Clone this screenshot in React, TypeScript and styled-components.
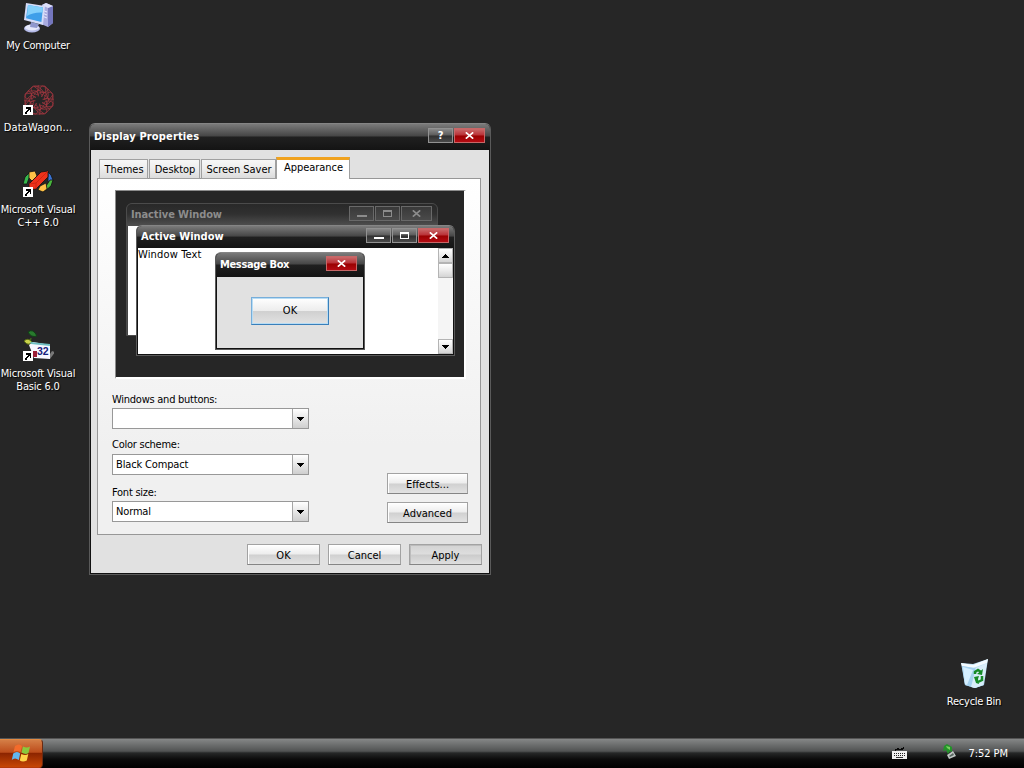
import React from "react";
import styled, { createGlobalStyle, css } from "styled-components";

type CaptionKind = "help" | "min" | "max" | "close";

interface CaptionProps {
  kind: CaptionKind;
  inactive?: boolean;
}

// Glyphs for the title bar buttons
const CaptionButton: React.FC<CaptionProps> = ({ kind, inactive = false }) => (
  <CaptionBox $close={kind === "close"} $inactive={inactive}>
    {kind === "help" && "?"}
    {kind === "min" && (
      <svg width="10" height="9" shapeRendering="crispEdges">
        <path d="M0 6h10v2H0z" fill="currentColor" />
      </svg>
    )}
    {kind === "max" && (
      <svg width="9" height="7" shapeRendering="crispEdges">
        <path d="M0 0h9v7H0zM1 2v4h7V2z" fill="currentColor" fillRule="evenodd" />
      </svg>
    )}
    {kind === "close" && (
      <svg width="9" height="7">
        <path d="M.8.3 8.2 6.7M8.2.3.8 6.7" stroke="currentColor" strokeWidth="1.6" />
      </svg>
    )}
  </CaptionBox>
);

const Arrow: React.FC<{ up?: boolean }> = ({ up = false }) => (
  <svg width="7" height="4" shapeRendering="crispEdges">
    <path d={up ? "M3 0h1v1h1v1h1v1h1v1H0V3h1V2h1V1h1z" : "M0 0h7v1H6v1H5v1H4v1H3V3H2V2H1V1H0z"} />
  </svg>
);

const Shortcut = () => (
  <g shapeRendering="crispEdges" transform="translate(1 -1)">
    <path d="M0 22h10v10H0z" fill="#fff" />
    <path d="M3 24h5v5H7v-2H6v1H5v1H4v2H2v-2h1v-1h1v-1h1v-1H3z" fill="#000" />
  </g>
);

const ComputerIcon = () => (
  <svg width="32" height="32" viewBox="0 0 32 32">
    <path d="m20 3 4-2 7 3v17l-5 4-7-3z" fill="#a9abdf" />
    <path d="m26 6 5-2v17l-5 4z" fill="#7476bd" />
    <path d="m20 3 4-2 7 3-5 2z" fill="#dcdff9" />
    <path d="m20 8 5 2M20 11l5 2M20 14l5 2" stroke="#e9eaff" />
    <ellipse cx="10" cy="26.500" rx="8" ry="4" fill="#b5bbe8" />
    <ellipse cx="10" cy="25.500" rx="7" ry="3" fill="#e6e9fb" />
    <path d="m9 20 8 2-2 4-7-1z" fill="#8f98ce" />
    <path d="M4 1 23 4 21 23 2 18z" fill="#d5dcf8" />
    <path d="m6 3 15 2.500-1.600 14.500L4 16.300z" fill="#3e9fe9" />
    <path d="m6 3 15 2.500-.5 5Q11 10 5 14z" fill="#83d0fb" />
  </svg>
);

const RosetteIcon = () => (
  <svg width="32" height="32" viewBox="0 0 32 32">
    <g fill="none" stroke="#a53640" strokeWidth="0.7">
      {[0, 45, 90, 135, 180, 225, 270, 315].map((angle) => (
        <path
          key={angle}
          d="M17 11Q9 10 9 4Q14 0 19 5Q24 9 19 13M12 2 23 2 24 9 16 6 12 11M20 11 27 5"
          transform={`rotate(${angle} 17 16)`}
        />
      ))}
    </g>
    <Shortcut />
  </svg>
);

// Green and blue ring behind a red bar with two yellow blocks
const CppIcon = () => (
  <svg width="32" height="32" viewBox="0 0 32 32">
    <g stroke="#111" strokeWidth="0.8">
      <path d="M1 18 3 11l5-5h3L7 12l-2 6z" fill="#36b84b" />
      <path d="m7 6 6-1 2 5-5 5-3-3z" fill="#ffc247" />
      <path d="m26 6 3 3 2 5-2 5-3-4z" fill="#3973d2" />
      <path d="m31 14-2 6-6 5 1-5 4-6z" fill="#49b63d" />
      <path d="m18 20 6-3 1 6-4 3-5-2z" fill="#ffc247" />
      <path d="m7 18 12-12 7-1v6L14 23l-7 1z" fill="#ed321b" />
      <path d="m7 18 7-1v6M14 17 26 5" fill="none" stroke="#c9220f" />
    </g>
    <Shortcut />
  </svg>
);

const BasicIcon = () => (
  <svg width="32" height="32" viewBox="0 0 32 32">
    <path d="M6 2q5-4 9 4-6 2-9-4z" fill="#287b2d" stroke="#123d17" />
    <path d="M2 11q4-4 8 1-4 5-8-1z" fill="#cbd34b" stroke="#596b16" />
    <path d="M9 8q-2 3 2 5" stroke="#4b7b1b" fill="none" />
    <path d="m26 27 4-6 3 1-5 7z" fill="#777" />
    <path d="m7 15 4-3 17 3v14L12 28z" fill="#f8f8ff" />
    <path d="m8 12 20 2v2L9 14z" fill="#6ebec1" />
    <path d="M11 21h4v6h-4z" fill="#9d2037" />
    <text x="15" y="25" fontFamily="Liberation Sans" fontWeight="bold" fontSize="10.5" fill="#17227b">32</text>
    <Shortcut />
  </svg>
);

const BinIcon = () => (
  <svg width="32" height="32" viewBox="0 0 32 32">
    <path d="m3 5 12 1L30 1l-4 26-9 3-10-3z" fill="#bddff2" />
    <path d="m3 5 12 2L30 1l-1 4-14 5L4 8z" fill="#f4fbff" />
    <path d="m4 8 13 2 9 17-9 3-10-3z" fill="#a5d2f0" />
    <path d="m5 9 10 3-6 15-2-1z" fill="#d5efff" />
    <path d="m29 5-4 22-8 3-4-1 5-19z" fill="#d9edf9" />
    <g fill="none" stroke="#168b28" strokeWidth="2.500">
      <path d="M17 16v-2l3-2 3 2M24 18v4l-4 2" />
    </g>
    <path d="m25 11-1 6-5-1zM16 19l5-1-1 3 1 5-3-1z" fill="#168b28" />
  </svg>
);

const WindowsLogo = () => (
  <svg width="20" height="19" viewBox="0 0 20 19">
    <path d="M4 2q4-3 7 0L9.500 8q-4-2-7 0z" fill="#f36b2b" />
    <path d="M12 2.500q4 2 7 0L17.500 9q-3 2-7-.5z" fill="#8ac83c" />
    <path d="M2.200 9.500q4-3 7 0L7.800 16q-4-3-7 0z" fill="#62b7ef" />
    <path d="M10.300 10q4 2 7 0l-1.500 6.500q-4 2-7 0z" fill="#ffd449" />
  </svg>
);

const KeyboardIcon = () => (
  <svg width="15" height="13" shapeRendering="crispEdges">
    <path d="M3 2h2V1h2v1h2V1h2V0h1v2h-1v1H4v1H3z" fill="#090909" />
    <path d="M0 4h15v8H0z" fill="#f1f1f1" />
    <path d="M2 6.500h11M2 8.500h11" stroke="#222" strokeDasharray="1 1" />
    <path d="M4 10h7v1H4z" fill="#333" />
  </svg>
);

const SafelyRemoveIcon = () => (
  <svg width="14" height="16">
    <path d="m4 11 6-4 3 5-7 3z" fill="#c1c8c5" />
    <path d="m6 12 4-3 1 2-4 2z" fill="#586660" />
    <path d="M1 2 4 0l5 3v5L7 7l-2 3-2-4-3 1z" fill="#239329" />
    <path d="m3 2 4 1v3L4 4z" fill="#77d15e" />
  </svg>
);

const shortcuts = [
  { x: 0, y: 2, label: "My Computer", spacing: -0.3, icon: <ComputerIcon /> },
  { x: 0, y: 84, label: "DataWagon...", spacing: 0.15, icon: <RosetteIcon /> },
  { x: 0, y: 166, label: "Microsoft Visual\nC++ 6.0", spacing: -0.2, icon: <CppIcon /> },
  { x: 0, y: 330, label: "Microsoft Visual\nBasic 6.0", spacing: -0.2, icon: <BasicIcon /> },
  { x: 936, y: 658, label: "Recycle Bin", spacing: -0.25, icon: <BinIcon /> },
];

const fields = [
  { label: "Windows and buttons:", value: "", top: 14, gap: 1 },
  { label: "Color scheme:", value: "Black Compact", top: 9, gap: 2 },
  { label: "Font size:", value: "Normal", top: 11, gap: 1 },
];

const App: React.FC = () => (
  <Desktop>
    <GlobalStyle />
    <Workspace>
      {shortcuts.map((item) => (
        <DesktopItem key={item.label} $x={item.x} $y={item.y}>
          {item.icon}
          <ItemLabel $spacing={item.spacing}>{item.label}</ItemLabel>
        </DesktopItem>
      ))}

      <Dialog>
        <TitleBar $height={25}>
          <Title $spacing={0.15}>Display Properties</Title>
          <CaptionButton kind="help" />
          <CaptionButton kind="close" />
        </TitleBar>
        <DialogBody>
          <Tabs>
            <Tab $width={49}>Themes</Tab>
            <Tab $width={51}>Desktop</Tab>
            <Tab $width={75}>Screen Saver</Tab>
            <ActiveTab>Appearance</ActiveTab>
          </Tabs>
          <Panel>
            <Preview>
              <InactiveWindow>
                <TitleBar $height={21} $inactive>
                  <Title $spacing={-0.1}>Inactive Window</Title>
                  <CaptionButton kind="min" inactive />
                  <CaptionButton kind="max" inactive />
                  <CaptionButton kind="close" inactive />
                </TitleBar>
                <WindowContent />
              </InactiveWindow>
              <ActiveWindow>
                <TitleBar $height={21}>
                  <Title $spacing={0}>Active Window</Title>
                  <CaptionButton kind="min" />
                  <CaptionButton kind="max" />
                  <CaptionButton kind="close" />
                </TitleBar>
                <WindowContent>
                  <WindowText>Window Text</WindowText>
                  <ScrollBar>
                    <ScrollButton><Arrow up /></ScrollButton>
                    <ScrollButton />
                    <ScrollTrack />
                    <ScrollButton><Arrow /></ScrollButton>
                  </ScrollBar>
                </WindowContent>
              </ActiveWindow>
              <MessageBox>
                <TitleBar $height={23} $right={7}>
                  <Title $spacing={-0.35}>Message Box</Title>
                  <CaptionButton kind="close" />
                </TitleBar>
                <MessageContent>
                  <DefaultButton>OK</DefaultButton>
                </MessageContent>
              </MessageBox>
            </Preview>
            <Form>
              <div>
                {fields.map((field) => (
                  <Field key={field.label} $top={field.top} $gap={field.gap}>
                    <Label>{field.label}</Label>
                    <Select>
                      <SelectValue>{field.value}</SelectValue>
                      <SelectArrow><Arrow /></SelectArrow>
                    </Select>
                  </Field>
                ))}
              </div>
              <SideButtons>
                <Button $width={81}>Effects...</Button>
                <Button $width={81}>Advanced</Button>
              </SideButtons>
            </Form>
          </Panel>
          <Footer>
            <Button $width={73}>OK</Button>
            <Button $width={73}>Cancel</Button>
            <Button $width={73} $pressed>Apply</Button>
          </Footer>
        </DialogBody>
      </Dialog>
    </Workspace>
    <Taskbar>
      <StartButton><WindowsLogo /></StartButton>
      <Tray>
        <KeyboardIcon />
        <TrayIcon><SafelyRemoveIcon /></TrayIcon>
        <Clock>7:52 PM</Clock>
      </Tray>
    </Taskbar>
  </Desktop>
);

const GlobalStyle = createGlobalStyle`
  * {
    box-sizing: border-box;
  }

  body {
    margin: 0;
    overflow: hidden;
    background: #262626;
    font: 11px/14px "DejaVu Sans Condensed", "DejaVu Sans", sans-serif;
    font-stretch: condensed;
    color: #000;
  }

  svg {
    display: block;
    flex: none;
  }

  button {
    padding: 0;
    font: inherit;
    color: inherit;
  }
`;

const Desktop = styled.main`
  display: flex;
  flex-direction: column;
  width: 1024px;
  height: 768px;
`;

// Desktop surface
const Workspace = styled.div`
  position: relative;
  flex: 1;
`;

const DesktopItem = styled.div<{ $x: number; $y: number }>`
  position: absolute;
  left: ${({ $x }) => $x}px;
  top: ${({ $y }) => $y}px;
  width: 76px;
  display: flex;
  flex-direction: column;
  align-items: center;
  gap: 5px;
`;

const ItemLabel = styled.span<{ $spacing: number }>`
  color: #fff;
  text-align: center;
  white-space: pre;
  line-height: 13px;
  letter-spacing: ${({ $spacing }) => $spacing}px;
  text-shadow: 1px 1px 1px #000;
`;

// Window frames
const frame = css`
  position: absolute;
  display: flex;
  flex-direction: column;
  border: 1px solid #5a5a5a;
  border-top-color: #858585;
  border-radius: 6px 6px 0 0;
  background: #111;
  overflow: hidden;
`;

const Dialog = styled.section`
  ${frame}
  left: 89px;
  top: 123px;
  width: 402px;
  height: 452px;
  padding: 0 1px 1px;
`;

const TitleBar = styled.header<{ $height: number; $inactive?: boolean; $right?: number }>`
  display: flex;
  flex: none;
  align-items: center;
  gap: 1px;
  height: ${({ $height }) => $height + 1}px;
  margin: 0 -1px;
  padding: 0 ${({ $right = 5 }) => $right}px 2px 4px;
  color: ${({ $inactive }) => ($inactive ? "#8c8c8c" : "#fff")};
  background: ${({ $inactive }) =>
    $inactive
      ? "linear-gradient(#292929, #303030 45%, #505050)"
      : "linear-gradient(#7b7b7b, #464646 46%, #202020 50%, #141414)"};
`;

const Title = styled.h2<{ $spacing: number }>`
  flex: 1;
  margin: 0;
  padding-top: 1px;
  font-size: 11px;
  line-height: 14px;
  font-weight: bold;
  white-space: nowrap;
  letter-spacing: ${({ $spacing }) => $spacing}px;
`;

const CaptionBox = styled.span<{ $close: boolean; $inactive: boolean }>`
  display: flex;
  align-items: center;
  justify-content: center;
  width: ${({ $close }) => ($close ? 31 : 25)}px;
  height: 15px;
  margin-top: -1px;
  border: 1px solid ${({ $inactive, $close }) => ($inactive ? "#696969" : $close ? "#c76767" : "#929292")};
  font-weight: bold;
  background: ${({ $close, $inactive }) => {
    if ($inactive) return "linear-gradient(#393939, #4a4a4a)";
    return $close
      ? "linear-gradient(#c96a6a, #b92f35 48%, #990000 52%, #b40b13)"
      : "linear-gradient(#898989, #5b5b5b 48%, #303030 52%, #4a4a4a)";
  }};
`;

const DialogBody = styled.div`
  display: flex;
  flex-direction: column;
  flex: 1;
  padding: 7px 8px 7px 6px;
  background: #e1e1e1;
`;

// Tabs and their page
const Tabs = styled.div`
  display: flex;
  align-items: flex-end;
  gap: 1px;
  height: 22px;
  padding-left: 2px;
  margin-bottom: -1px;
  z-index: 1;
`;

const Tab = styled.div<{ $width: number }>`
  width: ${({ $width }) => $width}px;
  height: 20px;
  padding-left: 1px;
  border: 1px solid #a0a0a0;
  background: linear-gradient(#f7f7f7, #eee 45%, #dcdcdc);
  line-height: 19px;
  text-align: center;
  white-space: nowrap;
  letter-spacing: -0.05px;
`;

const ActiveTab = styled(Tab).attrs({ $width: 74 })`
  height: 22px;
  margin-left: -1px;
  border-top: 3px solid #f0a21e;
  border-bottom: 0;
  background: #fff;
  line-height: 15px;
`;

const Panel = styled.div`
  width: 384px;
  height: 357px;
  border: 1px solid #979797;
  background: linear-gradient(#fff, #f0f0f0 75%);
`;

const Preview = styled.div`
  position: relative;
  width: 351px;
  height: 189px;
  margin: 11px 0 0 17px;
  border: solid;
  border-width: 1px 2px 2px 1px;
  border-color: #8c8c8c #fff #fff #8c8c8c;
  background: #262626;
`;

const InactiveWindow = styled.div`
  ${frame}
  left: 10px;
  top: 12px;
  width: 312px;
  height: 133px;
  padding: 0 1px;
  border-color: #4b4b4b;
  background: #444;
`;

const ActiveWindow = styled.div`
  ${frame}
  left: 20px;
  top: 34px;
  width: 319px;
  height: 131px;
  padding: 0 1px 1px;
`;

const MessageBox = styled.div`
  ${frame}
  left: 99px;
  top: 61px;
  width: 150px;
  height: 98px;
  padding: 0 1px 1px;
`;

const WindowContent = styled.div`
  display: flex;
  flex: 1;
  justify-content: space-between;
  background: #fff;
`;

const WindowText = styled.span`
  letter-spacing: 0.15px;
`;

const ScrollBar = styled.div`
  display: flex;
  flex-direction: column;
  width: 15px;
  background: #f5f5f5;
`;

const ScrollButton = styled.div`
  display: flex;
  align-items: center;
  justify-content: center;
  height: 15px;
  border: 1px solid #b4b4b4;
  background: linear-gradient(#fff, #ececec 50%, #d4d4d4);
`;

const ScrollTrack = styled.div`
  flex: 1;
`;

const MessageContent = styled.div`
  display: flex;
  flex: 1;
  align-items: center;
  justify-content: center;
  padding-bottom: 3px;
  background: #e1e1e1;
`;

// Buttons
const Button = styled.button<{ $width: number; $pressed?: boolean }>`
  width: ${({ $width }) => $width}px;
  height: 21px;
  padding-top: 2px;
  border: 1px solid #a2a2a2;
  border-bottom-color: #858585;
  box-shadow: inset 1px 1px ${({ $pressed }) => ($pressed ? "#bcbcbc" : "#fff")};
  background: ${({ $pressed }) =>
    $pressed
      ? "linear-gradient(#d2d2d2, #dedede 48%, #cbcbcb 52%, #dfdfdf)"
      : "linear-gradient(#fff, #ededed 48%, #d0d0d0 52%, #e2e2e2)"};
`;

const DefaultButton = styled(Button).attrs({ $width: 78 })`
  height: 28px;
  padding-top: 0;
  border-color: #77aeda #397fba #397fba #77aeda;
  box-shadow: inset 0 0 0 1px #b7dcf4;
`;

const Form = styled.div`
  display: flex;
  justify-content: space-between;
  padding: 0 12px 0 14px;
`;

const Field = styled.div<{ $top: number; $gap: number }>`
  display: flex;
  flex-direction: column;
  gap: ${({ $gap }) => $gap}px;
  margin-top: ${({ $top }) => $top}px;
`;

const Label = styled.span`
  letter-spacing: -0.25px;
`;

const Select = styled.div`
  display: flex;
  width: 197px;
  height: 21px;
  border: 1px solid #989898;
  background: #fff;
`;

const SelectValue = styled.span`
  flex: 1;
  padding: 3px 3px 0;
  letter-spacing: -0.15px;
`;

const SelectArrow = styled.span`
  display: flex;
  align-items: center;
  justify-content: center;
  width: 16px;
  border-left: 1px solid #a5a5a5;
  background: linear-gradient(#fff, #e7e7e7 50%, #cfcfcf);
`;

const SideButtons = styled.div`
  display: flex;
  flex-direction: column;
  justify-content: flex-end;
  gap: 8px;
  margin-bottom: -1px;
`;

const Footer = styled.div`
  display: flex;
  justify-content: flex-end;
  gap: 8px;
  margin: 9px -1px 0 0;
`;

// Taskbar
const Taskbar = styled.footer`
  display: flex;
  justify-content: space-between;
  height: 30px;
  border-top: 1px solid #555;
  background: linear-gradient(#858787, #515353 42%, #262828 48%, #0b0b0b 70%, #000);
`;

const StartButton = styled.button`
  display: flex;
  align-items: center;
  justify-content: center;
  width: 43px;
  border: 1px solid #e58b42;
  border-left: 0;
  border-right-color: #6b2a11;
  border-bottom-color: #b73a09;
  border-radius: 0 4px 4px 0;
  background: linear-gradient(#d47e46, #bd4d1c 45%, #8d2500 50%, #c64605);
`;

const Tray = styled.div`
  display: flex;
  align-items: center;
  padding-right: 16px;
`;

const TrayIcon = styled.span`
  margin: -3px 11px 0 36px;
`;

const Clock = styled.time`
  color: #fff;
  letter-spacing: -0.05px;
`;

export default App;
